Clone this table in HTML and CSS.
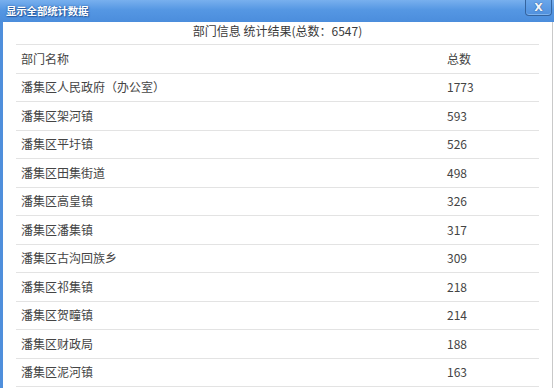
FILE: index.html
```html
<!DOCTYPE html>
<html lang="zh-CN">
<head>
<meta charset="utf-8">
<title>显示全部统计数据</title>
<link rel="stylesheet" href="styles.css">
</head>
<body>
<div class="window">
  <div class="titlebar">
    <span class="title">显示全部统计数据</span>
    <span class="close">X</span>
  </div>
  <div class="content">
    <div class="caption">部门信息 统计结果(总数：6547)</div>
    <table class="stats">
      <thead>
        <tr><th class="name">部门名称</th><th class="num">总数</th></tr>
      </thead>
      <tbody>
        <tr><td class="name">潘集区人民政府（办公室）</td><td class="num">1773</td></tr>
        <tr><td class="name">潘集区架河镇</td><td class="num">593</td></tr>
        <tr><td class="name">潘集区平圩镇</td><td class="num">526</td></tr>
        <tr><td class="name">潘集区田集街道</td><td class="num">498</td></tr>
        <tr><td class="name">潘集区高皇镇</td><td class="num">326</td></tr>
        <tr><td class="name">潘集区潘集镇</td><td class="num">317</td></tr>
        <tr><td class="name">潘集区古沟回族乡</td><td class="num">309</td></tr>
        <tr><td class="name">潘集区祁集镇</td><td class="num">218</td></tr>
        <tr><td class="name">潘集区贺疃镇</td><td class="num">214</td></tr>
        <tr><td class="name">潘集区财政局</td><td class="num">188</td></tr>
        <tr><td class="name">潘集区泥河镇</td><td class="num">163</td></tr>
      </tbody>
    </table>
  </div>
</div>
</body>
</html>
```

FILE: styles.css
```css
html, body {
  margin: 0;
  padding: 0;
  background: #ffffff;
  overflow: hidden;
}
body {
  font-family: "Noto Sans CJK SC", "Noto Sans", sans-serif;
  font-size: 12px;
  color: #444444;
  text-spacing-trim: space-all;
  font-feature-settings: "halt" 0, "chws" 0, "palt" 0, "vchw" 0;
}
.window {
  width: 554px;
  height: 388px;
  display: flex;
  flex-direction: column;
}
.titlebar {
  height: 22px;
  flex: none;
  display: flex;
  align-items: flex-start;
  justify-content: space-between;
  background: linear-gradient(#78b0ee, #5597e3 45%, #4b8ddc);
}
.title {
  margin: 4px 0 0 6px;
  font-size: 10.5px;
  line-height: 14px;
  font-weight: bold;
  color: #ffffff;
  letter-spacing: -0.2px;
  text-shadow: 0 0 2px #1d4f95, 1px 1px 1px #2a5ea6;
}
.close {
  width: 27px;
  height: 16px;
  margin-right: 2px;
  box-sizing: border-box;
  border: 1px solid #34649f;
  border-top: none;
  border-radius: 0 0 4px 4px;
  background: linear-gradient(#6aa6ea, #4f90de);
  box-shadow: inset 0 -1px 0 #7eb3ee;
  color: #f2f6fc;
  font-family: "DejaVu Sans", sans-serif;
  font-size: 11px;
  font-weight: bold;
  line-height: 15px;
  text-align: center;
  text-shadow: 0 0 1px #2f5a92, 0 0 1px #2f5a92;
}
.content {
  flex: 1;
  border-left: 3px solid #4f8fdc;
  border-right: 1px solid #c9c9c9;
  margin-right: 1px;
  padding: 0 13px 0 13px;
  background: #ffffff;
}
.caption {
  text-align: center;
  line-height: 18px;
  padding: 0 0 4px 0;
  color: #3a3a3a;
}
.stats {
  width: 100%;
  border-collapse: collapse;
  border-top: 1px solid #e3e3e3;
}
.stats th, .stats td {
  font-weight: normal;
  text-align: left;
  padding: 0 5px;
  height: 28.5px;
  line-height: 16px;
  border-bottom: 1px solid #e3e3e3;
  box-sizing: border-box;
  color: #444444;
}
.stats .name {
  width: 426px;
}
```
